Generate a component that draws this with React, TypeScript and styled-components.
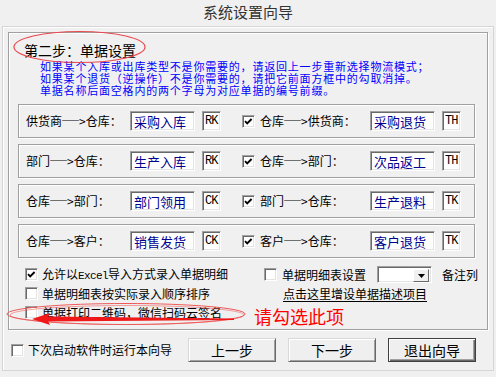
import React from 'react';
import styled, { createGlobalStyle, css } from 'styled-components';

const GlobalStyle = createGlobalStyle`
  html, body {
    margin: 0;
    padding: 0;
    background: #f0f0f0;
  }
  body {
    font-family: "Noto Sans CJK SC", "Noto Sans", sans-serif;
  }
`;

const sunken = css`
  box-sizing: border-box;
  background: #fff;
  border: 1px solid;
  border-color: #a0a0a0 #fff #fff #a0a0a0;
  box-shadow: inset 1px 1px 0 #696969, inset -1px -1px 0 #e3e3e3;
`;

const Wizard = styled.div`
  position: relative;
  width: 496px;
  height: 377px;
  background: #f0f0f0;
  overflow: hidden;
  color: #000;
  font-size: 12px;
`;

const TitleBar = styled.div`
  height: 26px;
  line-height: 23px;
  text-align: center;
  font-size: 15px;
  color: #333;
`;

const Panel = styled.div`
  box-sizing: border-box;
  margin-left: 2px;
  width: 492px;
  height: 345px;
  padding: 5px 0 0 5px;
  border: 1px solid #d5d5d5;
  box-shadow: inset 1px 1px 0 #fff;
`;

const Group = styled.div`
  box-sizing: border-box;
  width: 480px;
  height: 298px;
  border: 1px solid #a0a0a0;
  box-shadow: 1px 1px 0 #fff, inset 1px 1px 0 #fff;
`;

const StepTitle = styled.div`
  margin: 8px 0 0 15px;
  font-size: 14px;
  line-height: 18px;
`;

const Notes = styled.div`
  margin: 1px 0 0 31px;
  font-size: 11px;
  letter-spacing: 0.8px;
  line-height: 12px;
  color: #0000ff;
  white-space: nowrap;
`;

const Rows = styled.div`
  display: flex;
  flex-direction: column;
  gap: 6px;
  margin: 8px 0 0 9px;
`;

const Row = styled.div`
  box-sizing: border-box;
  width: 457px;
  height: 34px;
  display: flex;
  align-items: center;
  padding-left: 7px;
  border: 1px solid #a0a0a0;
  box-shadow: 1px 1px 0 #fff, inset 1px 1px 0 #fff;
`;

const RowLabel = styled.span<{ $w: number; $gap?: number }>`
  width: ${({ $w }) => $w}px;
  margin-left: ${({ $gap }) => $gap ?? 0}px;
  white-space: nowrap;
  line-height: 16px;
`;

const Arr = styled.span`
  display: inline-block;
  width: 17px;
  overflow: visible;
  transform: scaleX(1.42);
  transform-origin: left center;
`;

const NameField = styled.div`
  ${sunken};
  width: 65px;
  height: 20px;
  padding: 1px 0 0 3px;
  font-size: 13px;
  line-height: 17px;
  color: #000090;
  white-space: nowrap;
`;

const CodeField = styled.div`
  ${sunken};
  width: 19px;
  height: 20px;
  margin-left: 7px;
  padding: 1px 0 0 2px;
  font-family: "Liberation Mono", monospace;
  font-size: 12px;
  letter-spacing: -0.9px;
  line-height: 16px;
`;

const Box = styled.span<{ $gap?: number }>`
  ${sunken};
  flex: none;
  display: inline-flex;
  width: 13px;
  height: 13px;
  margin-left: ${({ $gap }) => $gap ?? 0}px;
`;

const Options = styled.div`
  display: grid;
  grid-template-columns: 245px 1fr;
  grid-auto-rows: 19px;
  margin-top: 7px;
`;

const Option = styled.div<{ $pad?: number }>`
  display: flex;
  align-items: center;
  gap: 4px;
  padding-left: ${({ $pad }) => $pad ?? 16}px;
  white-space: nowrap;
  line-height: 16px;
`;

const Latin = styled.span`
  font-family: "Liberation Mono", monospace;
  font-size: 11px;
  letter-spacing: -0.6px;
`;

const Combo = styled.div`
  ${sunken};
  width: 55px;
  height: 17px;
  margin: 0 6px 0 7px;
  display: flex;
  justify-content: flex-end;
  padding: 2px;
`;

const ComboButton = styled.span`
  box-sizing: border-box;
  width: 16px;
  height: 13px;
  background: #f0f0f0;
  border: 1px solid;
  border-color: #fff #696969 #696969 #fff;
  display: flex;
  align-items: center;
  justify-content: center;
`;

const Link = styled.span`
  text-decoration: underline;
  text-underline-offset: 2px;
`;

const Hint = styled.span`
  margin-top: 8px;
  font-size: 18px;
  line-height: 19px;
  color: #ff0000;
`;

const Footer = styled.div`
  display: flex;
  align-items: center;
  height: 24px;
  margin-top: 8px;
  padding: 0 17px 0 3px;
`;

const FooterCheck = styled.div`
  display: flex;
  align-items: center;
  gap: 4px;
  line-height: 16px;
`;

const Buttons = styled.div`
  margin-left: auto;
  display: flex;
  gap: 12px;
`;

const Button = styled.button<{ $default?: boolean }>`
  box-sizing: border-box;
  width: 88px;
  height: 24px;
  padding: 0;
  font-family: inherit;
  font-size: 14px;
  line-height: 20px;
  color: #000;
  background: #efefef;
  border: 1px solid;
  border-color: #d8d8d8 #696969 #696969 #d8d8d8;
  box-shadow: inset 1px 1px 0 #fff, inset -1px -1px 0 #a0a0a0;
  ${({ $default }) =>
    $default &&
    css`
      border-color: #404040;
      box-shadow: inset 1px 1px 0 #fff, inset -1px -1px 0 #696969,
        inset -2px -2px 0 #a0a0a0;
    `}
`;

const Marks = styled.svg`
  position: absolute;
  left: 0;
  top: 0;
  pointer-events: none;
`;

const Check = ({ on = false, gap }: { on?: boolean; gap?: number }) => (
  <Box $gap={gap}>
    {on && (
      <svg width="11" height="11" viewBox="0 0 11 11">
        <path d="M2 5.2 L4.2 7.4 L8.6 3" fill="none" stroke="#000" strokeWidth="1.9" />
      </svg>
    )}
  </Box>
);

const Label = ({ text }: { text: string }) => {
  const [a, b] = text.split('->');
  return (
    <>
      {a}
      <Arr>─</Arr>&gt;{b}
    </>
  );
};

const flows = [
  { from: '供货商->仓库：', name: '采购入库', code: 'RK', back: '仓库->供货商：', backName: '采购退货', backCode: 'TH' },
  { from: '部门->仓库：', name: '生产入库', code: 'RK', back: '仓库->部门：', backName: '次品返工', backCode: 'TH' },
  { from: '仓库->部门：', name: '部门领用', code: 'CK', back: '部门->仓库：', backName: '生产退料', backCode: 'TK' },
  { from: '仓库->客户：', name: '销售发货', code: 'CK', back: '客户->仓库：', backName: '客户退货', backCode: 'TK' },
];

const App: React.FC = () => {
  return (
    <Wizard>
      <GlobalStyle />
      <TitleBar>系统设置向导</TitleBar>
      <Panel>
        <Group>
          <StepTitle>第二步：单据设置</StepTitle>
          <Notes>
            <div>如果某个入库或出库类型不是你需要的，请返回上一步重新选择物流模式；</div>
            <div>如果某个退货（逆操作）不是你需要的，请把它前面方框中的勾取消掉。</div>
            <div>单据名称后面空格内的两个字母为对应单据的编号前缀。</div>
          </Notes>

          <Rows>
            {flows.map((f, i) => (
              <Row key={i}>
                <RowLabel $w={104}><Label text={f.from} /></RowLabel>
                <NameField>{f.name}</NameField>
                <CodeField>{f.code}</CodeField>
                <Check on gap={21} />
                <RowLabel $w={110} $gap={5}><Label text={f.back} /></RowLabel>
                <NameField>{f.backName}</NameField>
                <CodeField>{f.backCode}</CodeField>
              </Row>
            ))}
          </Rows>

          <Options>
            <Option>
              <Check on />
              <span>允许以<Latin>Excel</Latin>导入方式录入单据明细</span>
            </Option>
            <Option $pad={10}>
              <Check />
              <span style={{ marginLeft: 1 }}>单据明细表设置</span>
              <Combo>
                <ComboButton>
                  <svg width="7" height="4" viewBox="0 0 7 4">
                    <path d="M0 0 H7 L3.5 4 Z" fill="#000" />
                  </svg>
                </ComboButton>
              </Combo>
              <span>备注列</span>
            </Option>
            <Option>
              <Check />
              <span>单据明细表按实际录入顺序排序</span>
            </Option>
            <Option $pad={29}>
              <Link>点击这里增设单据描述项目</Link>
            </Option>
            <Option>
              <Check />
              <span>单据打印二维码，微信扫码云签名</span>
            </Option>
            <Option $pad={0}>
              <Hint>请勾选此项</Hint>
            </Option>
          </Options>
        </Group>

        <Footer>
          <FooterCheck>
            <Check />
            <span>下次启动软件时运行本向导</span>
          </FooterCheck>
          <Buttons>
            <Button>上一步</Button>
            <Button>下一步</Button>
            <Button $default>退出向导</Button>
          </Buttons>
        </Footer>
      </Panel>

      <Marks width="496" height="377" viewBox="0 0 496 377">
        <ellipse cx="79.5" cy="47" rx="65.5" ry="15.5" fill="none" stroke="#e8494f" strokeWidth="1.2" />
        <ellipse cx="126" cy="314" rx="119" ry="10.5" fill="none" stroke="#ee5a5a" strokeWidth="1" />
        <ellipse cx="127" cy="315" rx="117" ry="9.5" fill="none" stroke="#ee5a5a" strokeWidth="0.8" opacity="0.7" />
        <path d="M46 316.6 L234 318.6 L234 320 L46 321.4 Z" fill="#f01818" />
        <path d="M32 319 L50 313 L47 319 L50 325 Z" fill="#f01818" />
      </Marks>
    </Wizard>
  );
};

export default App;
